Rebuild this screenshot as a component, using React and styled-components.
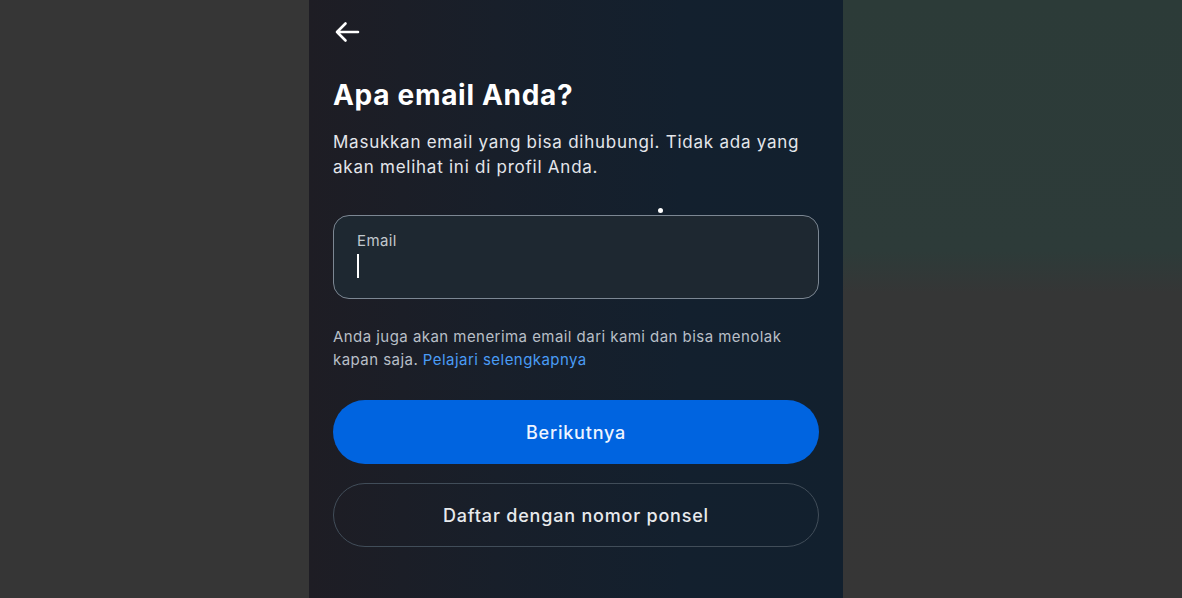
import React from "react";
import styled, { createGlobalStyle } from "styled-components";

const GlobalStyle = createGlobalStyle`
  html, body {
    margin: 0;
    padding: 0;
    background: #363636;
  }
  * {
    box-sizing: border-box;
  }
`;

const Screen = styled.div`
  display: grid;
  grid-template-columns: 309px 534px 1fr;
  width: 1182px;
  height: 598px;
  overflow: hidden;
  font-family: Inter, "Noto Sans", sans-serif;
`;

const Side = styled.div`
  background: ${p =>
    p.$right
      ? "linear-gradient(to bottom, #2c3b38 0%, #2d3b39 42%, #353636 49%, #363636 100%)"
      : "#363636"};
`;

const Panel = styled.div`
  position: relative;
  display: flex;
  flex-direction: column;
  padding: 20px 24px 0;
  background: linear-gradient(to right, #1e1d24 0%, #181f2a 35%, #13202e 70%, #12202e 100%);
  color: #fff;
`;

const BackButton = styled.button`
  display: flex;
  align-items: center;
  width: 28px;
  height: 24px;
  padding: 0;
  margin-left: 1px;
  border: none;
  background: none;
  color: #fff;
`;

const Title = styled.h1`
  margin: 34px 0 0;
  font-size: 28px;
  line-height: 34px;
  font-weight: 700;
  letter-spacing: 0.7px;
`;

const Subtitle = styled.p`
  margin: 18px 0 0;
  max-width: 480px;
  font-size: 17px;
  line-height: 25px;
  letter-spacing: 0.75px;
  color: #e4e6eb;
`;

const Field = styled.label`
  display: flex;
  flex-direction: column;
  margin-top: 35px;
  height: 84px;
  padding: 15px 23px 0;
  border: 1.5px solid #7c8793;
  border-radius: 16px;
  background: #1e2831;
`;

const FieldLabel = styled.span`
  font-size: 15px;
  line-height: 20px;
  letter-spacing: 0.4px;
  color: #c2c8ce;
`;

const Caret = styled.span`
  display: block;
  width: 2px;
  height: 24px;
  margin-top: 3px;
  background: #fff;
`;

const Dot = styled.span`
  position: absolute;
  left: 349px;
  top: 208px;
  width: 5px;
  height: 5px;
  border-radius: 50%;
  background: #fff;
`;

const Note = styled.p`
  margin: 26px 0 0;
  max-width: 470px;
  font-size: 15px;
  line-height: 23px;
  letter-spacing: 0.45px;
  color: #b8bfc7;

  a {
    color: #4a9cf5;
    text-decoration: none;
  }
`;

const Button = styled.button`
  display: flex;
  align-items: center;
  justify-content: center;
  height: 64px;
  margin-top: ${p => (p.$primary ? "29px" : "19px")};
  border-radius: 32px;
  border: ${p => (p.$primary ? "none" : "1.5px solid #414d59")};
  background: ${p => (p.$primary ? "#0064e0" : "transparent")};
  color: ${p => (p.$primary ? "#eef4ff" : "#e8eaed")};
  font-family: Inter, "Noto Sans", sans-serif;
  font-size: 18px;
  font-weight: 500;
  letter-spacing: 0.8px;
`;

const ArrowIcon = () => (
  <svg width="26" height="22" viewBox="0 0 26 22" fill="none">
    <path
      d="M24 11H3M11.5 2.5L3 11l8.5 8.5"
      stroke="currentColor"
      strokeWidth="2.6"
      strokeLinecap="round"
      strokeLinejoin="round"
    />
  </svg>
);

export default function App() {
  return (
    <>
      <GlobalStyle />
      <Screen>
        <Side />
        <Panel>
          <BackButton aria-label="Kembali">
            <ArrowIcon />
          </BackButton>
          <Title>Apa email Anda?</Title>
          <Subtitle>
            Masukkan email yang bisa dihubungi. Tidak ada yang akan melihat ini di profil Anda.
          </Subtitle>
          <Dot />
          <Field>
            <FieldLabel>Email</FieldLabel>
            <Caret />
          </Field>
          <Note>
            Anda juga akan menerima email dari kami dan bisa menolak kapan saja.{" "}
            <a href="#">Pelajari selengkapnya</a>
          </Note>
          <Button $primary>Berikutnya</Button>
          <Button>Daftar dengan nomor ponsel</Button>
        </Panel>
        <Side $right />
      </Screen>
    </>
  );
}
